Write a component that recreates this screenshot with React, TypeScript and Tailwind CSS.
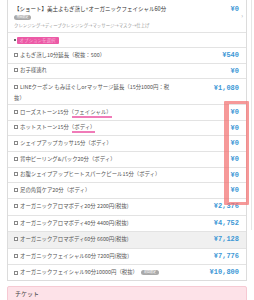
import type { ReactNode } from "react";

const Box = () => (
  <span className="inline-block w-[4px] h-[4px] border-[0.5px] border-[#888] mr-[2px] align-[0px] bg-white" />
);

function Price({ v }: { v: string }) {
  return (
    <span className="font-['Liberation_Mono',monospace] font-bold text-[7px] text-[#3d98d6] leading-none">
      {v}
    </span>
  );
}

function Pill({ text, w }: { text: string; w: string }) {
  return (
    <span className={`flex items-center justify-center h-[5px] rounded-full bg-[#a9a9a9] text-white text-[3px] leading-none ${w}`}>
      {text}
    </span>
  );
}

function Row({
  children,
  price,
  className = "h-[15.7px]",
}: {
  children: ReactNode;
  price: string;
  className?: string;
}) {
  return (
    <div className={`flex items-center justify-between pl-[6px] pr-[7px] border-b border-[#e3e3e3] ${className}`}>
      <span className="text-[5.4px] leading-none text-[#555] whitespace-nowrap">{children}</span>
      <Price v={price} />
    </div>
  );
}

const options = [
  "シェイプアップカッサ15分（ボディ）",
  "背中ピーリング&パック20分（ボディ）",
  "お腹シェイプアップヒートスパークピール15分（ボディ）",
  "足の角質ケア20分（ボディ）",
];

const organic = [
  { t: "オーガニックアロマボディ20分 2200円(税抜)", p: "¥2,376" },
  { t: "オーガニックアロマボディ40分 4400円(税抜)", p: "¥4,752" },
  { t: "オーガニックアロマボディ60分 6600円(税抜)", p: "¥7,128", gray: true },
  { t: "オーガニックフェイシャル60分 7200円(税抜)", p: "¥7,776" },
];

export default function App() {
  return (
    <div className="relative w-[254px] h-[300px] overflow-hidden bg-white text-[6px] leading-none font-['Noto_Sans_CJK_JP',sans-serif]">
      <div className="absolute right-[2px] top-0 h-[230px] border-r border-[#e6e6e6]" />
      <div className="ml-[7px] w-[240px] border-x border-b border-[#dcdcdc]">
        <div className="relative flex flex-col h-[33px] border-b border-[#e3e3e3] pl-[6px] pr-[7px] pt-[6px]">
          <div className="flex justify-between items-center">
            <span className="text-[5.5px] leading-none text-[#333]">【ショート】美土よもぎ蒸し+オーガニックフェイシャル60分</span>
            <Price v="¥0" />
          </div>
          <div className="mt-[2px] flex">
            <Pill text="期間限定" w="w-[17px]" />
          </div>
          <div className="mt-[3px] text-[4.4px] leading-none text-[#999] whitespace-nowrap">
            クレンジング→ディープクレンジング→マッサージ→マスク→仕上げ
          </div>
          <span className="absolute right-[3px] top-[13px] text-[6px] text-[#aaa] leading-none">›</span>
        </div>
        <div className="flex items-center h-[15px] pl-[6px] border-b border-[#e3e3e3]">
          <span className="w-[1.5px] h-[1.5px] bg-[#666] mr-[1px]" />
          <span className="px-[3px] h-[7px] flex items-center bg-[#ec5aa6] text-[#f7b3d6] text-[4.5px] leading-none rounded-[1px]">
            オプションを選択
          </span>
        </div>
        <Row price="¥540" className="h-[16px]">
          <Box />よもぎ蒸し10分延長（税抜：500）
        </Row>
        <Row price="¥0" className="h-[15px]">
          <Box />お子様連れ
        </Row>
        <div className="flex justify-between pl-[6px] pr-[7px] pt-[6px] h-[26px] border-b border-[#e3e3e3]">
          <span className="text-[5.4px] leading-[11px] text-[#555] -mt-[3.5px]">
            <Box />LINEクーポン もみほぐしorマッサージ延長（15分1000円：税
            <br />
            抜）
          </span>
          <Price v="¥1,080" />
        </div>
        <Row price="¥0">
          <Box />ローズストーン15分
          <span className="relative">
            （フェイシャル）
            <span className="absolute left-[3px] right-0 -bottom-[2px] h-[2px] bg-[#ec5aa6]/80" />
          </span>
        </Row>
        <Row price="¥0">
          <Box />ホットストーン15分
          <span className="relative">
            （ボディ）
            <span className="absolute left-[3px] right-0 -bottom-[2px] h-[2px] bg-[#ec5aa6]/80" />
          </span>
        </Row>
        {options.map((o) => (
          <Row key={o} price="¥0">
            <Box />
            {o}
          </Row>
        ))}
        {organic.map((o) => (
          <Row key={o.t} price={o.p} className={`h-[16.5px] ${o.gray ? "bg-[#f0f0f0]" : ""}`}>
            <Box />
            {o.t}
          </Row>
        ))}
        <div className="flex items-center justify-between h-[15px] pl-[6px] pr-[7px]">
          <span className="flex items-center text-[5.4px] leading-none text-[#555] whitespace-nowrap">
            <Box />オーガニックフェイシャル90分10000円（税抜）
            <span className="ml-[3px] flex">
              <Pill text="初回限定" w="w-[18px]" />
            </span>
          </span>
          <Price v="¥10,800" />
        </div>
      </div>
      <div className="ml-[7px] mt-[5px] w-[240px] h-[30px] bg-[#fde2e8] border border-[#f6c9d3] rounded-[2px] pl-[7px] pt-[4px]">
        <span className="text-[6px] leading-none text-[#444]">チケット</span>
      </div>
      <div className="absolute left-[224px] top-[101px] w-[25px] h-[104px] border-[3px] border-l-[5px] border-[#f26d6d]/70 rounded-[1px]" />
    </div>
  );
}
